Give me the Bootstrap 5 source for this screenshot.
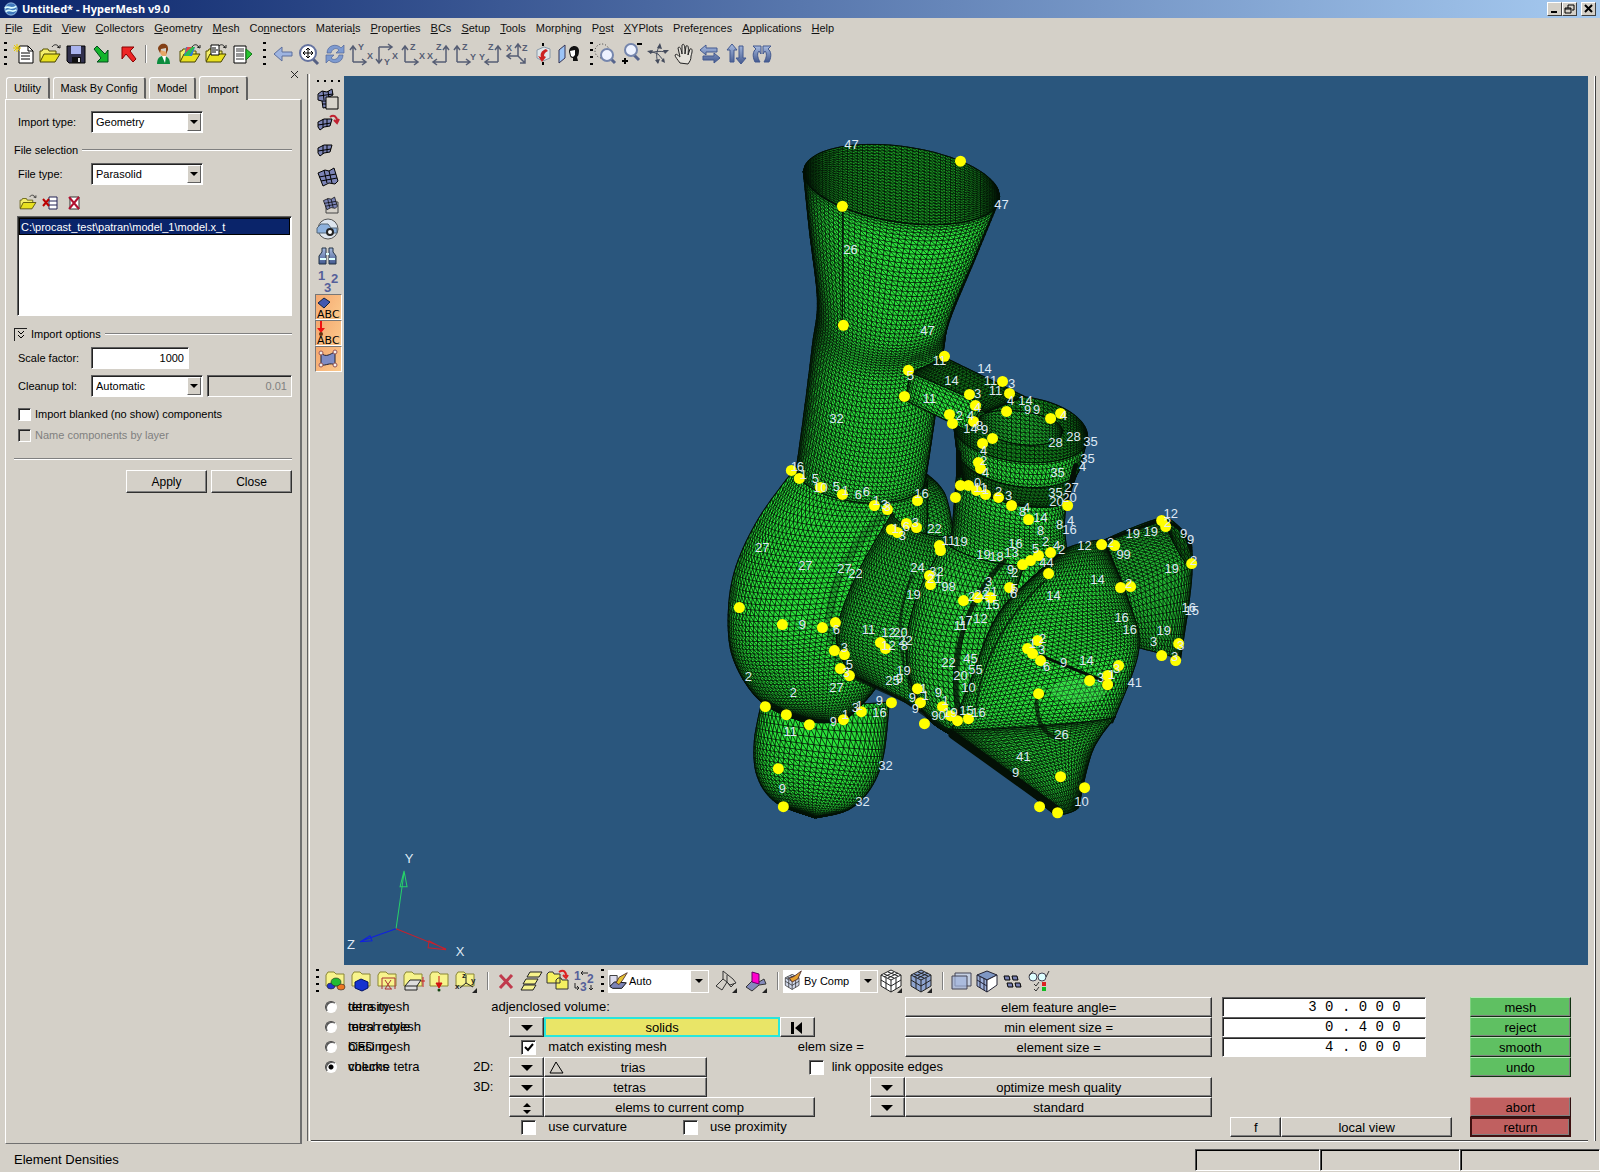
<!DOCTYPE html>
<html lang="en">
<head>
<meta charset="utf-8">
<meta name="viewport" content="width=device-width, initial-scale=1">
<title>Untitled* - HyperMesh v9.0</title>
<link href="https://cdn.jsdelivr.net/npm/bootstrap@5.3.0/dist/css/bootstrap.min.css" rel="stylesheet">
<style>
:root{--face:#d4d0c8;--shade:#808080;--dark:#202020}
body{background:var(--face);color:#000;font:11px/14px "Liberation Sans",Arial,sans-serif}
button,input,select{font:inherit;color:inherit;border-radius:0}
.titlebar{height:18px;background:linear-gradient(90deg,#0a246a,#a6caf0);color:#fff;font:bold 11px/18px "Noto Sans",sans-serif}
.winbtn{width:15px;height:14px;background:var(--face);border:1px solid;border-color:#fff #404040 #404040 #fff;padding:0;display:flex}
.winbtn svg{width:13px;height:12px}
.menus{height:20px;line-height:21px}
.menus a{color:#111;text-decoration:none;padding:0 5px}
.tools{height:32px}
.tool{width:26px;height:26px;flex:none;border:0;background:none;padding:1px}
.tool svg,.ico{width:24px;height:24px;display:block;overflow:visible}
.grip{width:3px;height:24px;flex:none;background:repeating-linear-gradient(#000 0 2px,transparent 2px 7px)}
.rule{width:2px;height:18px;flex:none;border-left:1px solid var(--shade);border-right:1px solid #fff}
.side{width:304px;flex:none;padding-top:6px}
.sidetabs{height:23px;padding-left:6px;gap:3px}
.sidetabs button{height:22px;border:1px solid;border-color:#fff #606060 transparent #fff;background:var(--face);border-radius:3px 3px 0 0;padding:0;border-right-width:2px}
.sidetabs .on{height:24px;margin-bottom:-1px;border-bottom:0;position:relative}
.sidebody{margin:0 2px 3px 5px;border:1px solid;border-color:#fff #707070 #707070 #fff;border-right-width:2px;padding:11px 8px 0 8px}
.lab{width:73px;flex:none}
.sunk{border:1px solid;border-color:#606060 #fff #fff #606060;box-shadow:inset 1px 1px #222;background:#fff;outline:0}
.frow{height:22px;padding-left:4px}
.sect{padding:10px 0 6px}
.combo{position:relative;height:22px}
.combo select{appearance:none;width:100%;height:100%;padding:0 18px 0 4px}
.combo::after{content:"";position:absolute;right:2px;top:2px;bottom:2px;width:14px;pointer-events:none;background:var(--face);border:1px solid;border-color:#fff #606060 #606060 #fff}
.combo::before{content:"";position:absolute;right:5px;top:9px;border:4px solid transparent;border-top-color:#000;border-bottom:0;z-index:1;pointer-events:none}
.combo svg{position:absolute;left:0;top:0;width:22px;height:22px}
.flat{height:23px}
.flat select{border:1px solid #fff;background:#fff}
.flat::after{width:17px;top:1px;right:1px;bottom:1px;border:0}
.flat::before{right:6px}
.etch{height:2px;flex:1;border-top:1px solid var(--shade);border-bottom:1px solid #fff}
.files{height:100px;list-style:none;margin:0;padding:1px}
.files li{background:#0a246a;color:#fff;height:17px;line-height:16px;padding-left:1px;border:1px solid #000}
.tick{appearance:none;width:13px;height:13px;margin:0;flex:none}
.raised{border:1px solid;border-color:#fff #303030 #303030 #fff;box-shadow:inset -1px -1px #808080;background:var(--face);padding:0;text-align:center}
.vsep{width:3px;border-left:1px solid #606060;border-right:1px solid #fff;flex:none;margin:4px 0 6px 3px}
.vtools{width:34px;flex:none;padding-left:5px}
.vtools .tool{width:27px;height:26px}
.vtools .lit{background:linear-gradient(120deg,#f5a870,#fbc98c);border:1px solid;border-color:#777 #fff #fff #777;padding:0}
.hgrip{height:10px;width:24px;margin-left:2px;flex:none;background:repeating-linear-gradient(90deg,#000 0 2px,transparent 2px 7px) 0 4px/100% 2px no-repeat}
.view{background:#2a567d;flex:1;min-height:0;min-width:0;position:relative;margin-right:7px}
.view>svg{position:absolute;inset:0;width:100%;height:100%}
.view text{font:13px "Liberation Sans",sans-serif;fill:#dfe9f5;text-anchor:middle;dominant-baseline:central}
.frame{border-right:1px solid #404040;box-shadow:-1px 0 #fff inset;margin:6px 4px 6px 0;min-width:0}
.opts{display:grid;margin:0 7px 0 1px;grid-template-columns:162fr 36fr 35fr 162fr 73fr 35fr 55fr 35fr 307fr 10fr 203fr 44fr 101fr 17fr;grid-auto-rows:20px;border-bottom:1px solid #444;box-shadow:0 1px #fff;height:144px;font-size:13px;line-height:20px}
.opts>*{min-width:0}
.opts .raised{line-height:17px;height:20px}
.opts label{white-space:nowrap}
.pick{padding-left:14px}
.stack{display:grid;padding-left:11px}
.stack>*{grid-area:1/1}
.go{background:#5fc062;border-color:#b8e8b8 #103010 #103010 #7fd080}
.stop{background:#c06060;border-color:#e0a0a0 #301010 #301010 #d08080}
.num{font:14px "Liberation Mono",monospace;text-align:right;padding:0 24px 0 4px;width:100%;height:20px}
.rad{appearance:none;width:12px;height:12px;border-radius:50%;border:1px solid;border-color:#444 #fff #fff #444;background:#fff;margin:0;box-shadow:inset 1px 1px #555}
.rad:checked{background:radial-gradient(#000 2px,#fff 3px)}
.box{width:15px;height:15px}
.opts .picked{background:#e9e567;border:2px solid #28e6dc;padding:0;line-height:15px;box-shadow:none}
.opts .hot{border:2px solid #401010;line-height:15px}
.status{height:27px;border-bottom:2px solid #fff;font-size:13px;padding-left:14px}
.well{height:22px;border:1px solid;border-color:#505050 #fff #fff #505050;box-shadow:inset 1px 1px #000}
</style>
<script src="https://cdn.jsdelivr.net/npm/bootstrap@5.3.0/dist/js/bootstrap.bundle.min.js"></script>
</head>
<body class="d-flex flex-column vh-100 overflow-hidden">
<svg width="0" height="0" class="position-absolute" aria-hidden="true">
<defs>
<linearGradient id="steel" x2="0" y2="1"><stop stop-color="#a9bce0"/><stop offset="1" stop-color="#43598f"/></linearGradient>
<g id="folder"><path d="M2 19V9h2l1-2h5l1 2h7v3" fill="#f4ee6c" stroke="#555000"/><path d="M2 20l4-8h16l-5 8z" fill="#e8e020" stroke="#444000"/><path d="M14 5c2-3 5-3 7 0m-2 0l3 1V3" fill="none" stroke="#222"/></g>
<g id="tab"><path d="M2 17V6l2-3h6l2 2h8v12z" fill="#f7f38c" stroke="#8a8634"/></g>
<symbol id="i-new" viewBox="0 0 24 24"><path d="M7 4h9l5 5v12H7z" fill="#fff" stroke="#000"/><path d="M16 4v5h5M9 11h9M9 14h9M9 17h9" fill="none" stroke="#000"/><path d="M5 2v8M1 6h8M2 3l6 6M8 3L2 9" stroke="#e6c800"/></symbol>
<symbol id="i-open" viewBox="0 0 24 24"><use href="#folder"/></symbol>
<symbol id="i-save" viewBox="0 0 24 24"><path d="M3 4h18v17H5l-2-2z" fill="#30304c" stroke="#000"/><path d="M7 4h10v8H7z" fill="#aab4ee"/><path d="M8 15h9v6H8z" fill="#111"/><path d="M14 16h2v4h-2z" fill="#ddd"/></symbol>
<symbol id="i-imp" viewBox="0 0 24 24"><path d="M4 7l3-3 8 8 3-4v12H7l4-4z" fill="#14b52c" stroke="#034a1c"/></symbol>
<symbol id="i-exp" viewBox="0 0 24 24"><path d="M20 17l-3 3-7-8-4 5V5h12l-4 4z" fill="#ee2525" stroke="#800"/></symbol>
<symbol id="i-user" viewBox="0 0 24 24"><path d="M5 22c0-6 3-8 6-8s7 1 7 8z" fill="#0b8c3e"/><path d="M8 8c-1 6 7 10 7 2z" fill="#e6a667"/><path d="M6 7C6 1 17-1 16 8l-2 4V6L9 7l-1 4z" fill="#834016"/><path d="M10 14l3 7 1-7z" fill="#fff"/></symbol>
<symbol id="i-fcol" viewBox="0 0 24 24"><use href="#folder"/><path d="M6 14L8 5h9l-3 9z" fill="#2b7ce0"/><path d="M6 14l6-9h5l-6 9z" fill="#2dbd4e"/><path d="M7 11l2-6h5z" fill="#e84646"/></symbol>
<symbol id="i-fdoc" viewBox="0 0 24 24"><use href="#folder"/><path d="M7 3h8v10H7z" fill="#fff" stroke="#000"/><path d="M8 6h4M8 8h6M8 10h4" stroke="#000"/></symbol>
<symbol id="i-run" viewBox="0 0 24 24"><path d="M4 4h12v17H4z" fill="#fff" stroke="#000"/><path d="M6 7h8M6 9h8M6 12h8M6 14h8M6 17h8" stroke="#333"/><path d="M16 7l6 5-6 6z" fill="#27c52f" stroke="#127a18"/></symbol>
<symbol id="i-back" viewBox="0 0 24 24"><path d="M3 12l8-7v5h10v4H11v5z" fill="#9eb4e0" stroke="#5c6e9c"/></symbol>
<symbol id="i-fit" viewBox="0 0 24 24"><path d="M16 17l5 5" stroke="#556083" stroke-width="3"/><circle cx="11" cy="11" r="8" fill="#fff" stroke="#6573a0" stroke-width="2"/><path d="M11 6v10M6 11h10M9 8l2-2 2 2M9 14l2 2 2-2M8 9l-2 2 2 2M14 9l2 2-2 2" fill="none" stroke="#000"/></symbol>
<symbol id="i-ref" viewBox="0 0 24 24"><path d="M4 11c0-8 10-10 14-5l3-3v8h-8l3-3c-3-3-7-1-8 3zM20 13c0 8-10 10-14 5l-3 3v-8h8l-3 3c3 3 7 1 8-3z" fill="#7d9ad0" stroke="#50659a" stroke-width=".7"/></symbol>
<symbol id="i-pan4" viewBox="0 0 24 24"><path d="M4 11c6-2 10-2 16-1M12 21c-2-6-2-12 2-18M12 12l-8-3M12 12l6 7" fill="none" stroke="#444b5c"/><path d="M1 9l6-1-2 4zM23 8l-6 0 2 4zM14 1l-3 5 5 1zM9 18l3 4 2-5zM19 21l-4-2 3-3z" fill="#444b5c"/></symbol>
<symbol id="i-hand" viewBox="0 0 24 24"><path d="M8 21c-2-3-5-6-5-8 2-2 3 1 5 2L6 6c1-2 3-1 4 6l0-9c2-2 3 0 3 9l1-8c2-1 3 0 2 9l2-6c2-1 3 1 1 7 0 4-1 5-3 8z" fill="#e4e1da" stroke="#222"/></symbol>
<symbol id="i-lr" viewBox="0 0 24 24"><path d="M2 8l6-5v3h11v4H8v3zM22 16l-6 5v-3H5v-4h11v-3z" fill="url(#steel)" stroke="#43598f"/></symbol>
<symbol id="i-ud" viewBox="0 0 24 24"><path d="M8 2l5 6h-3v12H6V8H3zM17 22l-5-6h3V4h4v12h3z" fill="url(#steel)" stroke="#43598f"/></symbol>
<symbol id="i-rot" viewBox="0 0 24 24"><path d="M10 20H5C2 14 3 9 6 7L3 4h8v8L9 9c-2 2-2 6 1 11zM14 20h5c3-6 2-11-1-13l3-3h-8v8l2-3c2 2 2 6-1 11z" fill="url(#steel)" stroke="#43598f"/></symbol>
<symbol id="i-lens" viewBox="0 0 24 24"><circle cx="8" cy="9" r="7" fill="none" stroke="#333" stroke-dasharray="1 2"/><path d="M17 17l4 4" stroke="#56648c" stroke-width="3"/><circle cx="13" cy="13" r="6" fill="#edf2ff" stroke="#7586ad" stroke-width="2"/></symbol>
<symbol id="i-zpm" viewBox="0 0 24 24"><path d="M14 13l5 5" stroke="#56648c" stroke-width="3"/><circle cx="11" cy="8" r="6" fill="#edf2ff" stroke="#7586ad" stroke-width="2"/><path d="M2 19h6M5 16v6M17 2h5" stroke="#000" stroke-width="2"/></symbol>
<symbol id="i-cube1" viewBox="0 0 24 24"><path d="M6 8l7-3 6 2v9l-7 3-6-3z" fill="#dfe7ea" stroke="#89a"/><path d="M15 7c-5 2-6 5-5 8l-3-1 4 6 4-5-2-1c0-2 1-4 4-5z" fill="#c22"/><path d="M12 1v3M12 20v3" stroke="#000" stroke-width="2"/></symbol>
<symbol id="i-face" viewBox="0 0 24 24"><path d="M2 8l6-5v13l-6 5z" fill="#9cc4f6" stroke="#335"/><path d="M12 10c0-7 9-8 10-2 0 5-1 6-2 7l1 4h-5v-3c-3 0-3-3-4-6z" fill="#111"/><path d="M13 9l5-1v5l-2 2-2-1z" fill="#fff"/></symbol>
<symbol id="i-m1" viewBox="0 0 24 24"><path d="M2 7l4-3 5 1 5-3 1 6-6 3 1 9-5 1-1-7-4-1z" fill="#7b83b5" stroke="#000"/><path d="M3 9l14-2M7 4l1 9M12 4l1 7M6 14h6M6 17h6" stroke="#000" fill="none"/></symbol>
<symbol id="i-m2" viewBox="0 0 24 24"><path d="M2 9l6-3h8l-2 7-6 1-4 3-2-3z" fill="#7b83b5" stroke="#000"/><path d="M2 12l13-2M7 6v9M11 6v8" stroke="#000"/></symbol>
<symbol id="i-m3" viewBox="0 0 24 24"><path d="M2 8l7-3 4 1 5-3 4 13-3 3-6-1-6 3z" fill="#7b83b5" stroke="#000"/><path d="M3 12l17-3M5 16l16-3M8 5l3 13M13 6l3 12" stroke="#000"/></symbol>
<symbol id="i-cube" viewBox="0 0 24 24"><path d="M2 6l10-5 10 5v11l-10 6-10-6z" stroke="#222"/><path d="M2 6l10 5 10-5M12 11v12M2 11l10 6 10-6M5 5l10 4M9 3l10 4M9 9l10-5M5 8l10-5M7 9v11M17 9v11" fill="none" stroke="#222"/></symbol>
<symbol id="i-brush" viewBox="0 0 24 24"><path d="M2 6h8v11H2z" fill="#dde" stroke="#333"/><path d="M2 18l5-5 13 1-5 6H5z" fill="#7b83b5" stroke="#000"/><path d="M9 14l3-6 9-5-5 8-4 5z" fill="#e5c330" stroke="#533"/></symbol>
</defs>
</svg>

<header>
<div class="titlebar d-flex align-items-center">
<svg class="ms-1 me-1" width="14" height="14" viewBox="0 0 16 16"><circle cx="8" cy="8" r="7" fill="#3f79bd" stroke="#a8d0f5"/><path d="M1 7c4-4 6 3 13-2M2 11c5-4 7 2 12-2" fill="none" stroke="#dff" stroke-width="2"/></svg>
<span class="flex-grow-1">Untitled* - HyperMesh v9.0</span>
<button class="winbtn" aria-label="Minimize"><svg viewBox="0 0 13 12"><path d="M3 9h6" stroke="#000" stroke-width="2"/></svg></button>
<button class="winbtn" aria-label="Restore"><svg viewBox="0 0 13 12"><path d="M5 5V2h6v5H9M2 5h6v5H2zM2 6h6" fill="none" stroke="#000"/></svg></button>
<button class="winbtn ms-1 me-1" aria-label="Close"><svg viewBox="0 0 13 12"><path d="M3 2l7 7M10 2L3 9" stroke="#000" stroke-width="2"/></svg></button>
</div>
<nav class="menus d-flex" aria-label="Main menu">
<a href="#"><u>F</u>ile</a><a href="#"><u>E</u>dit</a><a href="#"><u>V</u>iew</a><a href="#"><u>C</u>ollectors</a><a href="#"><u>G</u>eometry</a><a href="#"><u>M</u>esh</a><a href="#">Co<u>n</u>nectors</a><a href="#">Materia<u>l</u>s</a><a href="#"><u>P</u>roperties</a><a href="#"><u>B</u>Cs</a><a href="#"><u>S</u>etup</a><a href="#"><u>T</u>ools</a><a href="#">Morph<u>i</u>ng</a><a href="#">P<u>o</u>st</a><a href="#"><u>X</u>YPlots</a><a href="#">Prefe<u>r</u>ences</a><a href="#"><u>A</u>pplications</a><a href="#"><u>H</u>elp</a>
</nav>
<div class="tools d-flex align-items-center ps-1" id="topbar"></div>
</header>

<main class="d-flex flex-grow-1 overflow-hidden">
<aside class="side d-flex flex-column">
<div class="sidetabs d-flex align-items-end">
<button style="width:44px">Utility</button><button style="width:93px">Mask By Config</button><button style="width:47px">Model</button><button class="on" style="width:49px">Import</button>
<svg class="ms-auto align-self-start me-1" width="10" height="10" viewBox="0 0 10 10" style="margin-top:-6px"><path d="M1 1l7 7M8 1L1 8" stroke="#222"/></svg>
</div>
<form class="sidebody flex-grow-1">
<div class="frow d-flex align-items-center"><label class="lab" for="itype">Import type:</label><span class="combo" style="width:112px"><select id="itype" class="sunk"><option>Geometry</option></select></span></div>
<div class="sect d-flex align-items-center gap-1"><span>File selection</span><span class="etch"></span></div>
<div class="frow d-flex align-items-center"><label class="lab" for="ftype">File type:</label><span class="combo" style="width:112px"><select id="ftype" class="sunk"><option>Parasolid</option></select></span></div>
<div class="d-flex gap-1 ps-1 pt-2 pb-1">
<svg width="20" height="19" viewBox="0 0 24 24"><use href="#folder"/></svg>
<svg width="18" height="19" viewBox="0 0 18 19"><path d="M7 4h8v12H7zM7 8h8M7 12h8" fill="#fff" stroke="#225"/><path d="M1 6l6 7M7 6l-6 7" stroke="#b00" stroke-width="2"/></svg>
<svg width="20" height="19" viewBox="0 0 20 19"><path d="M6 4h9v12H6z" fill="#fff" stroke="#333"/><path d="M5 4l10 12M15 4L5 16" stroke="#b01030" stroke-width="2"/></svg>
</div>
<div style="padding-left:3px"><ul class="files sunk"><li>C:\procast_test\patran\model_1\model.x_t</li></ul></div>
<div class="d-flex align-items-center gap-1" style="padding-top:11px"><svg width="13" height="13" viewBox="0 0 13 13"><path d="M0 13V0h13" fill="none" stroke="#222" stroke-width="2"/><path d="M4 3l3 3 3-3M4 7l3 3 3-3" fill="none" stroke="#000"/></svg><span>Import options</span><span class="etch"></span></div>
<div class="frow d-flex align-items-center mt-1 pt-1"><label class="lab" for="scale">Scale factor:</label><input id="scale" class="sunk text-end px-1" style="width:98px;height:22px" value="1000"></div>
<div class="frow d-flex align-items-center mt-2"><label class="lab" for="tol">Cleanup tol:</label><span class="combo" style="width:112px"><select id="tol" class="sunk"><option>Automatic</option></select></span><input class="sunk text-end px-1 ms-1 flex-grow-1" aria-label="Tolerance value" style="width:20px;height:22px;background:#d4d0c8;color:#808080" value="0.01" disabled></div>
<div class="d-flex align-items-center gap-1 ps-1" style="padding-top:10px"><input class="tick sunk" type="checkbox" id="blank"><label for="blank">Import blanked (no show) components</label></div>
<div class="d-flex align-items-center gap-1 ps-1" style="padding-top:7px"><input class="tick sunk" type="checkbox" id="layer" style="background:#d4d0c8" disabled><label for="layer" style="color:#808080">Name components by layer</label></div>
<div class="d-flex pt-3"><span class="etch"></span></div>
<div class="d-flex justify-content-end gap-1" style="padding-top:10px"><button type="button" class="raised" style="width:81px;height:23px;font-size:12px">Apply</button><button type="button" class="raised" style="width:81px;height:23px;font-size:12px">Close</button></div>
</form>
</aside>
<div class="vsep"></div>
<section class="frame d-flex flex-column flex-grow-1">
<div class="d-flex flex-grow-1" style="min-height:0">
<div class="vtools d-flex flex-column" id="sidebar"></div>
<div class="view"><svg viewBox="344 76 1243 888" role="img" aria-label="Meshed solid model">
<g id="solid"></g>
<g fill="none" stroke="#041006" stroke-linecap="round">
<path d="M1004 560C965 600 945 660 960 722" stroke-width="5" opacity=".8"/><path d="M1045 580C1000 620 978 670 975 712" stroke-width="2" opacity=".7"/><path d="M952 734L1055 808" stroke-width="8"/><path d="M912 575C890 620 902 670 915 700" stroke-width="3" opacity=".6"/><path d="M1040 655L1112 684" stroke-width="3"/><path d="M850 675L905 700L950 732" stroke-width="4" opacity=".8"/><path d="M765 700C790 715 815 724 842 720" stroke-width="3" opacity=".8"/><path d="M885 512C845 550 815 600 838 660" stroke-width="9" opacity=".25"/><path d="M958 452L958 475M1075 465L1066 500" stroke-width="5"/><path d="M1036 700C1036 720 1042 735 1060 738" stroke-width="4" opacity=".7"/><path d="M842 206V320" stroke-width="1"/><path d="M1100 542L1160 519Q1185 525 1190 550" stroke-width="3"/>
</g>
<ellipse cx="1078" cy="690" rx="28" ry="12" fill="#4fe860" opacity=".3"/>
<g id="nodes" fill="#ff0"></g><g id="tags"></g>
<path d="M396 928L404 872M404 870l-4 16h7z" stroke="#27d06a" fill="none"/><path d="M396 928L446 948M446 949l-17-9-1 7z" stroke="#c8202c" fill="none"/><path d="M396 928L362 940M360 941l10-6 2 5z" stroke="#1020e0" fill="none"/>
<text x="409" y="858">Y</text><text x="460" y="951">X</text><text x="351" y="944">Z</text>
</svg></div>
</div>
<div class="tools d-flex align-items-center" id="lowbar" style="padding-left:6px"></div>
<form class="opts">
<div style="grid-area:1/1" class="pick d-flex align-items-center"><input class="rad" type="radio" name="m" id="r1"><label for="r1" class="stack"><span>tetra mesh</span><span>density</span></label></div>
<div style="grid-area:2/1" class="pick d-flex align-items-center"><input class="rad" type="radio" name="m" id="r2"><label for="r2" class="stack"><span>tetra remesh</span><span>mesh style</span></label></div>
<div style="grid-area:3/1" class="pick d-flex align-items-center"><input class="rad" type="radio" name="m" id="r3"><label for="r3" class="stack"><span>CFD mesh</span><span>biasing</span></label></div>
<div style="grid-area:4/1" class="pick d-flex align-items-center"><input class="rad" type="radio" name="m" id="r4" checked><label for="r4" class="stack"><span>volume tetra</span><span>checks</span></label></div>
<span style="grid-area:1/2/2/6;padding-left:18px">adjenclosed volume:</span>
<span style="grid-area:4/2">2D:</span><span style="grid-area:5/2">3D:</span>
<button type="button" class="raised" aria-label="Entity" style="grid-area:2/3"><svg width="12" height="6" viewBox="0 0 12 6"><path d="M0 0h12L6 6z"/></svg></button>
<button type="button" class="raised picked" style="grid-area:2/4/3/6">solids</button>
<button type="button" class="raised" aria-label="Reset" style="grid-area:2/6"><svg width="12" height="12" viewBox="0 0 12 12"><path d="M0 0h3v12H0zM11 0v12L4 6z"/></svg></button>
<div style="grid-area:3/3/4/7" class="d-flex align-items-center"><span class="d-flex ps-2 ms-1 position-relative"><input type="checkbox" class="tick sunk box" id="match" checked><svg class="position-absolute end-0 pe-none" width="15" height="15" viewBox="0 0 15 15"><path d="M4 7l3 3 5-6" fill="none" stroke="#000" stroke-width="2"/></svg></span><label for="match" class="ps-2 ms-1">match existing mesh</label></div>
<button type="button" class="raised" aria-label="2D type" style="grid-area:4/3"><svg width="12" height="6" viewBox="0 0 12 6"><path d="M0 0h12L6 6z"/></svg></button>
<button type="button" class="raised d-flex align-items-center ps-1" style="grid-area:4/4"><svg width="15" height="13" viewBox="0 0 15 13"><path d="M1 12L7 1l7 11z" fill="none" stroke="#000"/></svg><span class="flex-grow-1 pe-1">trias</span></button>
<button type="button" class="raised" aria-label="3D type" style="grid-area:5/3"><svg width="12" height="6" viewBox="0 0 12 6"><path d="M0 0h12L6 6z"/></svg></button>
<button type="button" class="raised" style="grid-area:5/4"><span class="ps-2">tetras</span></button>
<button type="button" class="raised" aria-label="Toggle" style="grid-area:6/3"><svg width="8" height="11" viewBox="0 0 8 11"><path d="M0 4l4-4 4 4zM0 7h8l-4 4z"/></svg></button>
<button type="button" class="raised" style="grid-area:6/4/7/7">elems to current comp</button>
<div style="grid-area:7/3/8/8" class="d-flex align-items-center ps-2"><input type="checkbox" class="tick sunk box ms-1" id="curv"><label for="curv" class="ps-2 ms-1">use curvature</label><span class="ps-5 ms-1"></span><input type="checkbox" class="tick sunk box ms-1" id="prox"><label for="prox" class="ps-2 ms-1">use proximity</label></div>
<span style="grid-area:3/6/4/9;padding-left:18px">elem size =</span>
<div style="grid-area:4/6/5/10;padding-left:29px" class="d-flex align-items-center"><input type="checkbox" class="tick sunk box" id="link"><label for="link" class="ps-2">link opposite edges</label></div>
<button type="button" class="raised" style="grid-area:1/9">elem feature angle=</button><button type="button" class="raised" style="grid-area:2/9">min element size =</button><button type="button" class="raised" style="grid-area:3/9">element size =</button>
<button type="button" class="raised" aria-label="Mode" style="grid-area:5/8"><svg width="12" height="6" viewBox="0 0 12 6"><path d="M0 0h12L6 6z"/></svg></button><button type="button" class="raised" style="grid-area:5/9">optimize mesh quality</button>
<button type="button" class="raised" aria-label="Level" style="grid-area:6/8"><svg width="12" height="6" viewBox="0 0 12 6"><path d="M0 0h12L6 6z"/></svg></button><button type="button" class="raised" style="grid-area:6/9">standard</button>
<input class="sunk num" aria-label="elem feature angle" style="grid-area:1/11" value="3 0 . 0 0 0"><input class="sunk num" aria-label="min element size" style="grid-area:2/11" value="0 . 4 0 0"><input class="sunk num" aria-label="element size" style="grid-area:3/11" value="4 . 0 0 0">
<div style="grid-area:7/11/8/13;padding:0 18px 0 8px" class="d-flex"><button type="button" class="raised" style="width:51px">f</button><button type="button" class="raised flex-grow-1">local view</button></div>
<button type="button" class="raised go" style="grid-area:1/13">mesh</button><button type="button" class="raised go" style="grid-area:2/13">reject</button><button type="button" class="raised go" style="grid-area:3/13">smooth</button><button type="button" class="raised go" style="grid-area:4/13">undo</button>
<button type="button" class="raised stop" style="grid-area:6/13">abort</button><button type="button" class="raised stop hot" style="grid-area:7/13">return</button>
</form>
</section>
</main>
<footer class="status d-flex align-items-center"><span class="flex-grow-1">Element Densities</span><span class="well" style="width:125px"></span><span class="well" style="width:140px"></span><span class="well" style="width:140px"></span></footer>

<script>
const use=id=>`<svg viewBox="0 0 24 24"><use href="#${id}"/></svg>`;
const raw=s=>`<svg viewBox="0 0 24 24">${s}</svg>`;
const btn=(name,s,c='')=>`<button type="button" class="tool ${c}" aria-label="${name}">${s}</button>`;
const set=list=>list.map(a=>btn(a[0],use('i-'+a[1]))).join('');
const ltr=(c,x,y,s=9,f='#555d74')=>`<text x="${x}" y="${y}" font-size="${s}" font-weight="bold" fill="${f}" font-family="Liberation Sans, sans-serif">${c}</text>`;
const axis=(d,a,ax,ay,b,bx,by)=>raw(`<path d="${d}" fill="none" stroke="#555d74" stroke-width="1.5"/>${ltr(a,ax,ay)}${ltr(b,bx,by)}`);
const up='M4 20V5M1 8l3-4 3 4M4 20h12M13 17l4 3-4 3', upR='M19 20V5M16 8l3-4 3 4M19 20H7M10 17l-4 3 4 3';
const grip='<span class="grip"></span>', rule='<span class="rule mx-1"></span>', gap='<span class="ps-1"></span>', wide='<span class="ps-2"></span>';
topbar.innerHTML=grip+gap+
 set([['New','new'],['Open','open'],['Save','save'],['Import','imp'],['Export','exp']])+rule+
 set([['User','user'],['Load results','fcol'],['Load report','fdoc'],['Run','run']])+wide+grip+gap+
 set([['Previous view','back'],['Fit','fit'],['Redraw','ref']])+
 btn('XY top',axis(up,'Y',9,8,'X',18,17))+
 btn('XY bottom',axis('M4 20V5M1 17l3 4 3-4M4 5h12M13 2l4 3-4 3','X',17,17,'Y',9,23))+
 btn('XZ left',axis(up,'Z',9,8,'X',18,17))+btn('XZ right',axis(upR,'Z',9,8,'X',0,17))+
 btn('YZ left',axis(up,'Z',9,8,'Y',17,18))+btn('YZ right',axis(upR,'Z',9,8,'Y',0,18))+
 btn('Isometric',axis('M13 14V3M10 6l3-4 3 4M13 14H3M6 11l-4 3 4 3M13 14l7 7M20 16v5h-5','X',1,9,'Z',17,9)+'')+
 btn('Rotate',use('i-cube1'))+btn('Reverse view',use('i-face'))+wide+grip+
 set([['Circle zoom','lens'],['Zoom in/out','zpm'],['Arc rotate','pan4'],['Pan','hand'],['Left right','lr'],['Up down','ud'],['Spin','rot']]);
const u=(id,t='')=>`<use href="#${id}" width="24" height="24" ${t}/>`;
const abc='<text x="1" y="23" font-size="11" font-family="DejaVu Sans, sans-serif">ABC</text>';
sidebar.innerHTML='<span class="hgrip"></span>'+
 btn('Mask',raw(u('i-m1')+'<path d="M10 10h12v12H10z" fill="#d8d4cc" stroke="#000"/>'))+
 btn('Reverse mask',raw(u('i-m2')+'<path d="M14 4c4-3 7 0 7 4m-3-1l3 3 2-4" fill="none" stroke="#c02030" stroke-width="2"/>'))+
 btn('Unmask adjacent',raw(u('i-m2')))+btn('Unmask all',use('i-m3'))+
 btn('Mask not shown',raw('<path d="M10 11h12v11H10z" fill="none" stroke="#444"/><g transform="translate(6 4) scale(.7)">'+u('i-m3')+'</g>'))+
 btn('Display car',raw('<circle cx="12" cy="12" r="10" fill="#dde5ee" stroke="#555"/><path d="M1 11l4-4h7l3 4h6v5H1z" fill="#8db1dd" stroke="#567"/><circle cx="14" cy="15" r="3" fill="#fff" stroke="#222" stroke-width="2"/>'))+
 btn('Find',raw('<path d="M3 21v-8l3-4V5h4v16zM13 21V5h4v4l3 4v8z" fill="url(#steel)" stroke="#234"/><path d="M4 16h6M13 16h6M10 11h3" stroke="#dff" stroke-width="2"/>'))+
 btn('Numbers',raw(ltr('1',2,11,13,'#55609a')+ltr('2',15,14,13,'#55609a')+ltr('3',8,23,13,'#55609a')))+
 btn('Element handles',raw('<path d="M2 8l6-5 6 4-6 6z" fill="#4258b0" stroke="#124"/>'+abc),'lit')+
 btn('Load handles',raw('<path d="M4 0v7H1l4 5 4-5H6V0z" fill="#e11"/><circle cx="5" cy="13" r="2" fill="#631"/>'+abc),'lit')+
 btn('Shrink',raw('<path d="M5 6c5 5 9 1 14-1v13c-5-3-9 1-14 0z" fill="#7f8cc4" stroke="#223"/><g fill="#eee" stroke="#955"><circle cx="5" cy="6" r="2"/><circle cx="19" cy="5" r="2"/><circle cx="5" cy="18" r="2"/><circle cx="19" cy="18" r="2"/></g>'),'lit');
const tab='<use href="#tab"/>',corner='<path d="M23 19v5h-5z" fill="#222"/>';
lowbar.innerHTML=grip+gap+
 btn('Assemblies',raw(tab+'<g stroke="#222" stroke-width=".6"><ellipse cx="7" cy="17" rx="4" ry="3" fill="#23c"/><ellipse cx="17" cy="18" rx="4" ry="3" fill="#e72"/><ellipse cx="12" cy="13" rx="5" ry="4" fill="#2b3"/></g>'))+
 btn('Components',raw(tab+'<path d="M5 13l6-3 7 3v6l-6 3-7-3z" fill="#1533d0" stroke="#016"/>'))+
 btn('Materials',raw(tab+'<path d="M6 20V9h13v11M9 11l6 9M15 11l-6 9h7" fill="none" stroke="#a33"/>'))+
 btn('Properties',raw(tab+'<path d="M3 17l5-6h11l-4 6v4H3zM3 17h12" fill="#ddd" stroke="#222"/><path d="M21 8v10M19 12h4" stroke="#c22"/>'))+
 btn('Load collectors',raw(tab+'<path d="M11 7v11M8 14l3 5 3-5z" fill="#d11" stroke="#c11"/><circle cx="11" cy="21" r="1.5" fill="#141"/>'))+
 btn('Systems',raw(tab+'<path d="M12 6v8l-6 5M12 14l7 4" fill="none" stroke="#222"/>'+ltr('x',1,20,8,'#222')+ltr('z',8,9,8,'#222')+ltr('y',17,14,8,'#222')+corner))+gap+rule+
 btn('Delete',raw('<path d="M6 6l12 13M18 6L6 19" stroke="#c03a4c" stroke-width="3"/>'))+
 btn('Card edit',raw('<path d="M10 3h12l-3 5H7zM6 10h12l-3 5H3zM4 16h12l-3 5H1z" fill="#f7f38c" stroke="#222"/>'))+
 btn('Organize',raw('<path d="M1 14V5l2-2h4l1 2h6v9zM10 20v-9l2-2h3l1 2h6v9z" fill="#f5f060" stroke="#333"/><path d="M13 3c5-3 7 0 7 4m-3-1l3 3 2-3" fill="none" stroke="#d22" stroke-width="2"/>'))+
 btn('Renumber',raw(ltr('1',2,11,12,'#55609a')+ltr('2',15,14,12,'#55609a')+ltr('3',8,22,12,'#55609a')+'<path d="M9 4h7m-5-2l-2 2 2 2M3 14v5h4m-2-2l2 2-2 2M19 16v5m-2-2l2 2 2-2" fill="none" stroke="#222"/>'))+gap+grip+gap+
 `<span class="combo flat" style="width:101px"><select aria-label="Geometry color mode" style="padding-left:20px"><option>Auto</option></select>${use('i-brush')}</span>`+gap+
 btn('Wireframe geometry',raw('<path d="M2 17l7-7 4 3-5 8zM9 10V2l10 8 3 4-6 2-3-3M13 6v7M13 13l4 5 3-3" fill="none" stroke="#333"/>'+corner))+gap+
 btn('Shaded geometry',raw('<path d="M2 18l7-7 6 2 5-3 2 5-7 1-7 6z" fill="#858bbb" stroke="#333"/><path d="M8 3l7 2v10l-7-2z" fill="#f0c" stroke="#606"/>'+corner))+gap+rule+
 `<span class="combo flat" style="width:95px"><select aria-label="Element color mode" style="padding-left:20px"><option>By Comp</option></select>${raw('<g transform="translate(1 4) scale(.75)" fill="#cfd6e8"><use href="#i-cube" width="24" height="24"/></g><path d="M7 9l5-2 8-6-4 9-6 3z" fill="#e5a030" stroke="#533"/>')}</span>`+
 btn('Wireframe elements',raw('<g fill="#fff">'+u('i-cube')+'</g>'+corner))+gap+
 btn('Shaded elements',raw('<g fill="#8ea4cf">'+u('i-cube')+'</g>'+corner))+gap+rule+
 btn('Transparency',raw('<path d="M6 4h16v13H6z" fill="#c5cfe2" stroke="#445"/><path d="M3 7h15v13H3z" fill="#9fb2dc" fill-opacity=".7" stroke="#445"/>'))+
 btn('Feature',raw('<path d="M2 6l10-4 10 4-10 5z" fill="#7f97c4" stroke="#223"/><path d="M2 6l10 5v12L2 17zM2 11l10 6M5 8v11M9 9v12" fill="#9fb2dc" stroke="#223"/><path d="M12 11l10-5v10l-10 7z" fill="#fff" stroke="#223"/>'))+
 btn('Shrink elements',raw('<path d="M3 7h5l1 4H4zM11 7h5l1 4h-5zM6 14h5l1 4H7zM14 14h5l1 4h-5z" fill="#7b83b5" stroke="#000"/>'))+
 btn('Visual options',raw('<circle cx="6" cy="8" r="4" fill="#dff" stroke="#445"/><circle cx="15" cy="8" r="4" fill="#dff" stroke="#445"/><path d="M2 7l4-5M19 8l3-6M7 15l2 2 3-4M7 20l2 2 3-4" fill="none" stroke="#333"/><path d="M15 13h4v4h-4z" fill="#d22"/><path d="M15 18h4v4h-4z" fill="#1b2"/>'));

// Surface patches: left and right silhouettes, bulge at top and bottom, cell counts, fill
const patches=[
 [[[763,695],[754,740],[757,776],[776,802],[814,817]],[[889,700],[883,755],[870,788],[848,809],[816,817]],5,0,30,28,'#2ae23a'],
 [[[880,480],[880,530],[890,580]],[[926,473],[945,495],[955,545]],0,0,20,24,'#22b832'],
 [[[796,466],[757,520],[733,575],[728,630],[737,668],[762,702],[800,720]],[[927,480],[925,540],[905,610],[880,680],[845,720]],24,2,42,56,'#2ae23a'],
 [[[803,172],[809,230],[817,300],[812,345],[804,410],[796,468]],[[999,197],[975,255],[950,315],[943,350],[934,420],[925,480]],38,28,40,68,'#2be43c'],
 [[[803,172],[803,171]],[[999,196],[999,197]],-38,38,48,24,'#1ca426'],
 [[[892,512],[856,575],[836,635],[850,676]],[[955,530],[965,600],[960,660],[950,730]],12,-4,32,44,'#27cf37'],
 [[[957,462],[954,500],[950,545],[940,610]],[[1070,470],[1064,520],[1066,560],[1060,620]],18,10,30,32,'#2be43c'],
 [[[945,540],[915,600],[906,660],[925,715],[960,738]],[[1025,560],[1010,610],[1000,670],[990,740],[970,745]],10,0,24,42,'#2ad83a'],
 [[[956,440],[962,478]],[[1083,455],[1067,498]],28,16,36,12,'#147c1c'],
 [[[953,424],[956,448]],[[1087,437],[1080,464]],30,30,40,6,'#2be43c'],
 [[[953,424],[953,425]],[[1087,436],[1087,438]],-34,30,40,16,'#169020'],
 [[[978,420],[978,421]],[[1062,430],[1062,431]],-14,18,26,8,'#22b832'],
 [[[944,357],[912,372]],[[1024,396],[985,412]],0,0,28,9,'#127018'],
 [[[910,372],[905,400]],[[984,404],[966,430]],0,0,16,8,'#2be43c'],
 [[[1100,542],[1112,590],[1130,645]],[[1160,518],[1191,555],[1180,658]],-2,0,24,28,'#22b832'],
 [[[1160,518],[1165,520]],[[1191,545],[1192,565]],-8,10,9,6,'#169020'],
 [[[1060,552],[1000,610],[970,680],[950,732]],[[1104,541],[1128,600],[1138,650],[1112,722]],-4,0,38,46,'#2be43c'],
 [[[948,728],[1000,768],[1052,812]],[[1115,716],[1092,750],[1078,806]],4,4,34,26,'#2ad83a']
];
const sample=(p,t)=>{const n=p.length-1,k=Math.min(n-1,Math.floor(t*n)),f=t*n-k,a=p[Math.max(0,k-1)],b=p[k],c=p[k+1],d=p[Math.min(n,k+2)];
 return [0,1].map(i=>.5*(2*b[i]+(c[i]-a[i])*f+(2*a[i]-5*b[i]+4*c[i]-d[i])*f*f+(3*b[i]-a[i]-3*c[i]+d[i])*f*f*f));};
solid.innerHTML=patches.map(([L,R,s0,s1,nu,nv,fill])=>{
 const at=(i,j)=>{const v=j/nv,t=i/nu,s=.3*t+.7*(1-Math.cos(Math.PI*t))/2,a=sample(L,v),b=sample(R,v);
  return (a[0]+(b[0]-a[0])*s).toFixed(1)+' '+(a[1]+(b[1]-a[1])*s+(s0+(s1-s0)*v)*Math.sqrt(Math.max(0,4*s*(1-s)))).toFixed(1);};
 const row=j=>Array.from({length:nu+1},(_,i)=>at(i,j)), col=i=>Array.from({length:nv+1},(_,j)=>at(i,j));
 let d='';
 for(let j=0;j<=nv;j++)d+='M'+row(j).join('L');
 for(let i=0;i<=nu;i++)d+='M'+col(i).join('L');
 for(let k=-nv;k<nu;k++){const z=[];for(let j=0;j<=nv;j++){const i=k+j;if(i>=0&&i<=nu)z.push(at(i,j));}if(z.length>1)d+='M'+z.join('L');}
 const edge='M'+[...row(0),...col(nu),...row(nv).reverse(),...col(0).reverse()].join('L')+'Z';
 return `<path d="${edge}" fill="${fill}" stroke="#031005"/><path d="${d}" fill="none" stroke="#031005" stroke-width=".8"/>`;}).join('');
nodes.innerHTML='960,161 842,206 843,325 908,370 904,396 944,356 1002,381 1009,393 969,394 975,405 949,414 952,423 1006,411 973,421 1050,418 1060,413 992,438 982,443 978,462 980,468 960,485 955,497 968,485 976,490 985,494 998,497 1011,505 1028,519 1067,505 1022,564 1030,560 1048,573 1038,555 1050,552 1101,544 1114,545 1161,520 1165,526 1191,563 1120,587 1130,586 963,600 977,597 990,597 1009,587 791,470 799,478 820,487 842,494 874,505 887,509 917,500 891,529 897,532 906,523 916,527 939,545 940,550 929,575 930,584 739,607 782,624 822,627 835,622 834,650 844,654 840,668 849,675 880,642 885,648 765,706 786,714 809,724 843,719 861,711 891,702 778,768 783,806 917,688 920,702 942,706 924,723 950,715 957,720 968,718 1027,648 1037,640 1032,653 1040,660 1089,680 1107,675 1107,684 1118,665 1038,693 1060,776 1084,787 1039,806 1057,812 1161,655 1175,660 1178,643'.split(' ').map(p=>{const[x,y]=p.split(',');return`<circle cx="${x}" cy="${y}" r="5.5"/>`}).join('');
tags.innerHTML='47,851,144 47,1001,204 26,850,249 47,927,330 5,910,375 11,939,360 14,951,380 11,929,398 32,836,418 14,984,368 11,990,380 11,995,390 3,1011,383 3,977,393 4,977,407 4,970,415 2,959,415 14,1025,400 9,1027,409 9,1036,409 4,1010,400 14,970,428 8,979,425 9,984,429 28,1073,436 28,1055,442 35,1090,441 35,1087,458 4,1082,466 35,1057,472 4,1063,415 4,983,450 2,983,460 4,985,472 35,1055,492 27,1071,487 20,1056,501 20,1069,497 3,1008,495 2,998,491 4,1026,507 8,1022,511 14,1040,517 8,1040,530 8,1059,524 16,1069,529 4,1070,520 12,1084,545 16,1015,543 19,983,554 18,996,556 13,1011,552 12,1170,513 19,1132,533 19,1150,531 9,1183,533 9,1190,539 2,1167,522 2,1110,542 99,1123,554 19,1171,568 2,1193,560 14,1097,579 2,1128,583 14,1053,595 16,1121,617 16,1188,607 15,1191,610 98,948,586 19,960,541 11,948,540 15,992,604 2,971,596 22,981,594 21,990,591 44,1046,562 5,1035,548 2,1045,541 4,1056,545 2,1061,549 9,1010,569 2,1014,572 6,1013,593 5,1014,588 3,988,581 11,980,487 1,985,489 0,977,482 1,794,466 6,800,466 1,803,474 5,815,478 10,820,487 5,836,486 1,845,490 6,858,494 6,866,491 1,876,500 3,884,504 3,887,506 16,921,493 22,934,528 1,895,528 6,906,526 3,915,522 3,902,535 27,762,547 27,805,565 27,844,568 22,855,573 24,917,567 32,936,571 21,934,578 19,913,594 9,802,624 6,836,629 11,868,629 3,844,647 5,849,664 3,846,672 27,836,687 12,888,632 20,900,632 22,905,640 8,904,645 12,888,645 19,903,670 25,892,680 9,899,678 16,879,712 9,879,700 9,833,721 1,845,714 3,855,707 1,859,705 11,790,731 32,885,765 32,862,801 9,782,788 2,748,676 2,793,692 22,948,662 20,960,675 9,912,697 1,923,688 9,915,708 1,925,695 9,938,692 1,945,700 90,938,715 19,950,712 15,966,710 16,978,712 10,968,687 45,970,658 55,975,669 17,965,620 12,980,618 11,960,625 2,1042,638 1,1032,643 3,1041,649 9,1063,662 6,1046,666 14,1086,660 3,1100,677 1,1111,674 3,1116,668 41,1134,682 19,1163,630 16,1129,629 3,1153,641 3,1180,645 3,1174,656 26,1061,734 41,1023,756 9,1015,772 10,1081,801'.split(' ').map(p=>{const[t,x,y]=p.split(',');return`<text x="${x}" y="${y}">${t}</text>`}).join('');
</script>
</body>
</html>
